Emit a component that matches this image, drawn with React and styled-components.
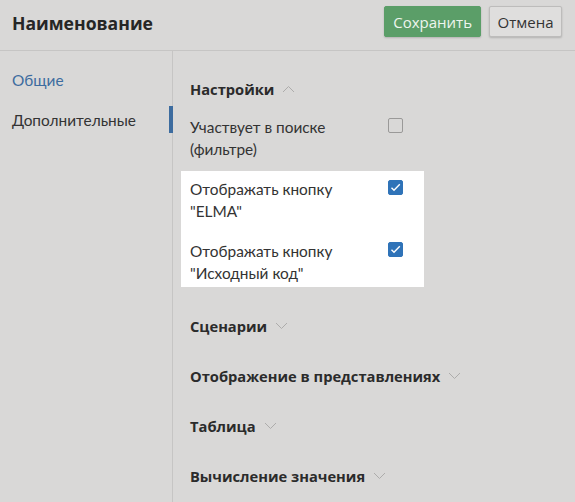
import React from 'react'
import styled, { createGlobalStyle } from 'styled-components'

const GlobalStyle = createGlobalStyle`
  html, body {
    margin: 0;
    padding: 0;
    background: #d9d8d7;
  }
  body {
    font-family: Lato, 'Noto Sans', sans-serif;
    color: #333;
  }
`

const Page = styled.div`
  width: 575px;
  height: 502px;
  display: flex;
  flex-direction: column;
  background: #d9d8d7;
  overflow: hidden;
`

const Header = styled.div`
  height: 50px;
  flex-shrink: 0;
  display: flex;
  align-items: flex-start;
  justify-content: space-between;
  padding: 0 13px 0 12px;
  border-bottom: 1px solid #c6c5c4;
`

const Title = styled.h1`
  margin: 0;
  padding-top: 10px;
  font-family: 'Open Sans', sans-serif;
  font-size: 17.6px;
  line-height: 26px;
  font-weight: 700;
  color: #262626;
`

const Actions = styled.div`
  display: flex;
  gap: 8px;
  padding-top: 6px;
`

const Button = styled.button`
  height: 31px;
  padding: 0 ${(p) => (p.$primary ? '8px' : '7.5px')};
  font-family: 'Open Sans', sans-serif;
  font-size: 15px;
  border-radius: 2px;
  cursor: pointer;
  border: 1px solid ${(p) => (p.$primary ? '#5b9e68' : '#bdbcbb')};
  background: ${(p) => (p.$primary ? '#5b9e68' : '#dfdedd')};
  color: ${(p) => (p.$primary ? '#eef5ee' : '#333')};
  box-shadow: 0 1px 2px rgba(0, 0, 0, 0.18);
`

const Body = styled.div`
  flex: 1;
  display: flex;
`

const Sidebar = styled.nav`
  width: 172px;
  flex-shrink: 0;
  border-right: 1px solid #c6c5c4;
  padding-top: 18px;
  display: flex;
  flex-direction: column;
  gap: 18px;
`

const NavItem = styled.div`
  position: relative;
  height: 22px;
  line-height: 22px;
  padding-left: 12px;
  font-size: 15.4px;
  color: ${(p) => (p.$active ? '#3d6c9f' : '#333')};

  ${(p) =>
    p.$marked &&
    `
    &::after {
      content: '';
      position: absolute;
      right: -1px;
      top: -3px;
      width: 4px;
      height: 27px;
      background: #3d6c9f;
    }
  `}
`

const Main = styled.main`
  flex: 1;
  padding: 27px 0 0 17px;
  display: flex;
  flex-direction: column;
`

const SectionTitle = styled.div`
  display: flex;
  align-items: center;
  gap: 8px;
  height: 22px;
  font-family: 'Open Sans', sans-serif;
  font-size: 14.7px;
  font-weight: 700;
  color: #2b2b2b;
  margin-top: ${(p) => p.$mt || 0}px;
`

const Field = styled.div`
  display: grid;
  grid-template-columns: 198px 16px;
  align-items: start;
  font-size: 15.4px;
  line-height: 22px;
  color: #333;
  margin-top: ${(p) => p.$mt || 0}px;
`

const Highlight = styled.div`
  box-sizing: border-box;
  margin: 11px 0 0 -9px;
  width: 243px;
  background: #fff;
  padding: 7px 0 3px 9px;
  display: flex;
  flex-direction: column;
  gap: 18px;
`

const Box = styled.span`
  width: 15px;
  height: 15px;
  margin-top: 2px;
  box-sizing: border-box;
  border-radius: 2px;
  border: 1px solid ${(p) => (p.$checked ? '#2f73b8' : '#9a9998')};
  background: ${(p) => (p.$checked ? '#2f73b8' : 'transparent')};
  display: flex;
  align-items: center;
  justify-content: center;
`

const Chevron = ({ up }) => (
  <svg width="13" height="8" viewBox="0 0 13 8" fill="none">
    <path
      d={up ? 'M1 7L6.5 1.5L12 7' : 'M1 1L6.5 6.5L12 1'}
      stroke="#adacab"
      strokeWidth="1"
    />
  </svg>
)

const Check = ({ checked }) => (
  <Box $checked={checked}>
    {checked && (
      <svg width="11" height="9" viewBox="0 0 11 9" fill="none">
        <path d="M1.5 4.8L4 7.2L9.8 1.3" stroke="#fff" strokeWidth="1.4" />
      </svg>
    )}
  </Box>
)

const sections = [
  'Сценарии',
  'Отображение в представлениях',
  'Таблица',
  'Вычисление значения',
]

export default function App() {
  return (
    <Page>
      <GlobalStyle />
      <Header>
        <Title>Наименование</Title>
        <Actions>
          <Button $primary>Сохранить</Button>
          <Button>Отмена</Button>
        </Actions>
      </Header>
      <Body>
        <Sidebar>
          <NavItem $active>Общие</NavItem>
          <NavItem $marked>Дополнительные</NavItem>
        </Sidebar>
        <Main>
          <SectionTitle>
            Настройки <Chevron up />
          </SectionTitle>
          <Field $mt={16}>
            <span>
              Участвует в поиске
              <br />
              (фильтре)
            </span>
            <Check />
          </Field>
          <Highlight>
            <Field>
              <span>
                Отображать кнопку
                <br />
                "ELMA"
              </span>
              <Check checked />
            </Field>
            <Field>
              <span>
                Отображать кнопку
                <br />
                "Исходный код"
              </span>
              <Check checked />
            </Field>
          </Highlight>
          {sections.map((s) => (
            <SectionTitle key={s} $mt={28}>
              {s} <Chevron />
            </SectionTitle>
          ))}
        </Main>
      </Body>
    </Page>
  )
}
